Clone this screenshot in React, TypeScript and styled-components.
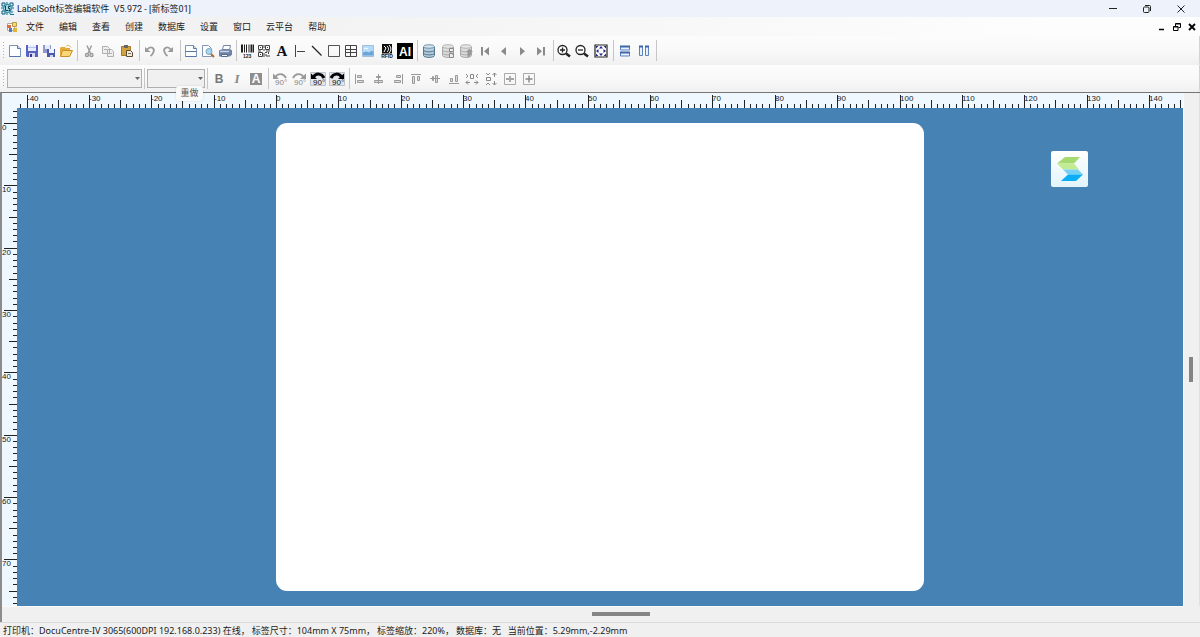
import React, { useLayoutEffect, useRef, useState } from "react";
import styled, { createGlobalStyle } from "styled-components";

const GlobalStyle = createGlobalStyle`
  * { box-sizing: border-box; }
  body { margin: 0; background: #f0f0f0; }
  button { font: inherit; color: inherit; background: none; border: 0; padding: 0; margin: 0; }
  svg { display: block; }
`;

const Window = styled.div`
  display: flex;
  flex-direction: column;
  height: 100vh;
  overflow: hidden;
  font-family: "Noto Sans", "Noto Sans CJK SC", sans-serif;
  font-size: 9px;
  line-height: 14px;
  color: #1a1a1a;
`;

const TitleBar = styled.header`
  display: flex;
  align-items: center;
  height: 17px;
  padding: 0 2px 0 1px;
  gap: 3px;
  background: #eef3fb;
`;

const Title = styled.h1`
  flex: 1;
  margin: 0;
  font-family: Roboto, "Noto Sans CJK SC", sans-serif;
  font-size: 9px;
  font-weight: 400;
  white-space: pre;
`;

const WindowControls = styled.div`
  display: flex;
`;

const WindowButton = styled.button`
  width: 34px;
  height: 17px;
  display: grid;
  place-items: center;
`;

const MenuBar = styled.nav`
  display: flex;
  align-items: center;
  height: 19px;
  padding: 0 1px 0 6px;
  background: linear-gradient(90deg, #f0f0f0 0%, #f3f3f3 28%, #fdfdfd 88%);
`;

const MenuItems = styled.div`
  flex: 1;
  display: flex;
  gap: 15px;
  margin-left: 8px;
`;

const MenuButton = styled.button`
  height: 18px;
  white-space: nowrap;
`;

const ChildButton = styled.button`
  width: 15px;
  height: 18px;
  display: grid;
  place-items: center;
`;

const Toolbar = styled.div<{ $height: number }>`
  display: flex;
  align-items: center;
  flex: none;
  height: ${(p) => p.$height}px;
  background: linear-gradient(#fcfcfc, #f9f9f9 50%, #f0f0f0);
  border-right: 1px solid #d4d4d4;
  border-radius: 0 0 3px 0;
`;

const Grip = styled.span`
  width: 5px;
  height: 19px;
  background: radial-gradient(circle, #b4b4b4 1px, transparent 1px) 2px 0 / 3px 3px repeat-y;
`;

const Group = styled.div<{ $last?: boolean; $padding?: string }>`
  display: flex;
  align-items: center;
  height: 21px;
  padding: ${(p) => p.$padding ?? "0 2px"};
  border-right: ${(p) => (p.$last ? "0" : "1px solid #c6c6c6")};
`;

const ToolButton = styled.button<{ $width: number }>`
  position: relative;
  width: ${(p) => p.$width}px;
  height: 20px;
  display: grid;
  place-items: center;
`;

const Tooltip = styled.span`
  position: absolute;
  z-index: 2;
  top: 45px;
  left: 17px;
  width: 27px;
  height: 15px;
  line-height: 14px;
  border-radius: 3px;
  background: #f9f9f9;
  box-shadow: 0 0 2px #00000026;
  color: #555;
  text-align: center;
`;

const Combo = styled.span<{ $width: number }>`
  position: relative;
  display: flex;
  width: ${(p) => p.$width}px;
  svg {
    position: absolute;
    right: 2px;
    top: 8px;
    pointer-events: none;
  }
`;

const ComboSelect = styled.select`
  appearance: none;
  width: 100%;
  height: 19px;
  border: 1px solid #b0b0b0;
  border-radius: 0;
  background: #f0f0f0;
  font: inherit;
`;

const Workspace = styled.main`
  flex: 1;
  min-height: 0;
  display: grid;
  grid-template-columns: 15px minmax(0, 1fr) 17px;
  grid-template-rows: 15px minmax(0, 1fr) 16px;
  border-top: 1px solid #757575;
  border-left: 2px solid #8c8c8c;
  background: #f0f0f0;
`;

const RulerCell = styled.div`
  background: #f0f8ff;
  min-width: 0;
  min-height: 0;
  overflow: hidden;
`;

const RulerText = styled.text`
  font-family: "Liberation Sans Narrow", "Liberation Sans", sans-serif;
  font-size: 8px;
  fill: #222;
`;

const Canvas = styled.section`
  position: relative;
  display: flex;
  align-items: center;
  justify-content: center;
  background: #4682b4;
  overflow: hidden;
`;

const Label = styled.div`
  flex: none;
  width: 648px;
  height: 468px;
  border-radius: 11px;
  background: #fff;
`;

const FloatingLogo = styled.button`
  position: absolute;
  top: 43px;
  right: 95px;
  width: 37px;
  height: 36px;
  display: grid;
  place-items: center;
  border-radius: 2px;
  background: linear-gradient(#ffffff, #e2f4fd);
`;

const VerticalScroll = styled.div`
  display: flex;
  align-items: center;
  justify-content: center;
  padding: 24px 2px 0 0;
  border-left: 1px solid #fafafa;
  border-right: 1px solid #e0e0e0;
`;

const HorizontalScroll = styled.div`
  grid-column: 1 / 3;
  display: flex;
  align-items: center;
  justify-content: center;
  padding: 0 0 2px 56px;
  border-top: 1px solid #fafafa;
`;

const Thumb = styled.div<{ $width: number; $height: number }>`
  width: ${(p) => p.$width}px;
  height: ${(p) => p.$height}px;
  background: #858585;
`;

const StatusBar = styled.footer`
  flex: none;
  display: flex;
  gap: 2px;
  height: 15px;
  padding-left: 3px;
  line-height: 16px;
  border-top: 1px solid #dadada;
  background: #f0f0f0;
  white-space: pre;
`;

/* ---------- icons ---------- */

const blue = "#5676a8";
const grey = "#9a9a9a";

const Doc = ({ lines = false }: { lines?: boolean }) => (
  <>
    <path d="M2.5 2.5h8l3 3v8h-11z" fill="#fdfeff" stroke="#8094b8" />
    <path d="M10.5 2.5v3h3" fill="#dbe6f5" stroke={blue} />
    {lines && <path d="M2.5 8.500h11" stroke={blue} />}
    <path d="M2.5 13.5h11" stroke={blue} />
  </>
);

const Disk = () => (
  <>
    <path d="M2 2h12v12H3l-1-1z" fill="#5961c4" />
    <path d="M4 2h8v6H4z" fill="#e8edff" />
    <path d="M4 4.5h8" stroke="#b9c4ee" />
    <path d="M5 10h6v4H5z" fill="#d4daf4" />
    <path d="M6 11h2v3H6z" fill="#343a8c" />
  </>
);

const Database = ({ tone, mark }: { tone: string; mark?: "edit" | "arrow" }) => (
  <>
    <path d="M2.500 4v8.500c0 2.500 11 2.500 11 0V4" fill={tone === "on" ? "#b7ccda" : "#dcdcdc"} />
    <path
      d="M2.500 4v8.500c0 2.500 11 2.500 11 0V4M2.500 7c0 2.500 11 2.500 11 0M2.500 10c0 2.500 11 2.500 11 0"
      fill="none"
      stroke={tone === "on" ? "#527a94" : "#a8a8a8"}
    />
    <ellipse cx="8" cy="3.500" rx="5.500" ry="1.800" fill={tone === "on" ? "#d4e4ee" : "#e6e6e6"} stroke={tone === "on" ? "#7597ac" : "#b4b4b4"} />
    {mark === "edit" && <path d="M9.500 5.500h4v3h-4zM9.500 10.500h4v4h-4zM9.500 8l4 4" fill="#eee" stroke="#888" />}
    {mark === "arrow" && <path d="M9.500 15V9H8l3.500-3.500L15 9h-2v3z" fill="#989898" />}
  </>
);

const Rotate = ({ flip, active }: { flip?: boolean; active?: boolean }) => {
  const c = active ? "#000" : grey;
  return (
    <>
      {active && <path d="M.5 1.500h15v13H.5z" fill="#e2e5ee" stroke="#bfc1c9" />}
      <g transform={flip ? "matrix(-1 0 0 1 16 0)" : undefined}>
        <path d="M3.500 6C6 2 11.500 2 14 7" fill="none" stroke={c} strokeWidth={active ? 3 : 1.8} />
        <path d="M1 2.500v5.500h6z" fill={c} />
      </g>
      <text x="3" y="14" fontSize="8" fontFamily="Liberation Sans, sans-serif" fill={active ? "#111" : "#888"}>
        90°
      </text>
    </>
  );
};

const Zoom = ({ plus }: { plus?: boolean }) => (
  <>
    <circle cx="6.500" cy="7" r="4.500" fill="#fff" stroke="#222" strokeWidth="1.300" />
    <path d={plus ? "M4 7h5M6.500 4.500v5" : "M4 7h5"} stroke="#222" strokeWidth="1.300" />
    <path d="M10 10.500l4 3" stroke="#222" strokeWidth="2.500" />
  </>
);

const icons: Record<string, React.ReactNode> = {
  new: <Doc />,
  save: <Disk />,
  saveAs: (
    <>
      <path d="M2 2h8v8H2z" fill="#8d98d2" />
      <path d="M4 2h5v4H4z" fill="#e6ebfb" />
      <path d="M6 6h8v8H6z" fill="#4d5aa8" />
      <path d="M8 6h5v4H8z" fill="#eef2ff" />
      <path d="M9 12h3v2H9z" fill="#ccd4ee" />
    </>
  ),
  open: (
    <>
      <path d="M2 5l1-1h4l1 1h4v8H2z" fill="#e3ab3c" />
      <path d="M2.500 13.500l2-6h10l-3 6z" fill="#fbd777" stroke="#c88f26" />
      <path d="M8 3.500c2-2 4-1 5 1" fill="none" stroke="#e0b455" />
    </>
  ),
  cut: (
    <g fill="none" stroke={grey} strokeWidth="1.400">
      <path d="M6 2.500l3.500 8M10.500 2.500L7 10.500" />
      <circle cx="6" cy="12" r="1.500" />
      <circle cx="10.500" cy="12" r="1.500" />
    </g>
  ),
  copy: (
    <g fill="#eee" stroke="#b0b0b0">
      <path d="M2.500 3.500h5l2 2v5h-7zM7.500 6.500h4l2 2v5h-6z" />
      <path d="M9 10.500h3M4 6.500h3" />
    </g>
  ),
  paste: (
    <>
      <path d="M2.500 3.500h9v9h-9z" fill="#d3a23b" stroke="#a37a2a" />
      <path d="M5 2h4v3H5z" fill="#666" />
      <path d="M7.500 7.500h4l2 2v4h-6z" fill="#f2ead7" stroke="#5a4c31" />
      <path d="M9 10.500h3" stroke="#777" />
    </>
  ),
  undo: (
    <>
      <path d="M5 6.500c4-4.500 8-1 6.500 2.500-.5 1.500-1.500 3-3 4" fill="none" stroke={grey} strokeWidth="1.800" />
      <path d="M3 4v5h5.500z" fill={grey} />
    </>
  ),
  redo: (
    <>
      <path d="M11 6.500c-4-4.500-8-1-6.500 2.500.5 1.500 1.500 3 3 4" fill="none" stroke={grey} strokeWidth="1.800" />
      <path d="M13 4v5H7.500z" fill={grey} />
    </>
  ),
  page: <Doc lines />,
  preview: (
    <>
      <path d="M2.500 2.500h6l3 3v8h-9z" fill="#fcfdff" stroke="#8396b8" />
      <circle cx="9" cy="8.500" r="3" fill="#a5d8ee" stroke="#7da5bd" />
      <path d="M11 11l3 3" stroke="#b06c35" strokeWidth="2" />
    </>
  ),
  print: (
    <>
      <path d="M5.500 6.500l1-4h7l-1 4z" fill="#fff" stroke="#7285a6" />
      <path d="M2 7.500l2-1h10l1 1v4l-2 2H2z" fill="#6e83a8" />
      <path d="M3 8.500h9" stroke="#c8d6ec" strokeWidth="1.500" />
      <path d="M4.500 11.500h6v2h-6z" fill="#f5f8ff" stroke="#566a90" />
    </>
  ),
  barcode: (
    <>
      <path d="M3 1.500v8M12.500 1.500v8" stroke="#222" strokeWidth="2" />
      <path d="M5.500 1.500v8M7.500 1.500v8M10 1.500v8M14.500 1.500v8" stroke="#222" />
      <text x="4" y="14.500" fontSize="5" fontWeight="700" fontFamily="Liberation Sans, sans-serif" fill="#222">
        123
      </text>
    </>
  ),
  qr: (
    <g fill="none" stroke="#444">
      <path d="M2.500 2.500h4v4h-4zM9.500 2.500h4v4h-4zM2.500 9.500h4v4h-4z" />
      <path d="M4 4.500h1M11 4.500h1M4 11.500h1M8 2v3M8 6v2M2 8h3M10 8h4M9 9.500h2M12.500 9v2M9 12h2v2M13 12v2M8 10v4" />
    </g>
  ),
  text: (
    <text x="8" y="13" textAnchor="middle" fontSize="15" fontWeight="700" fontFamily="Liberation Serif, serif" fill="#111">
      A
    </text>
  ),
  rule: <path d="M3.500 2v12M5 8.500h8" stroke="#444" />,
  line: <path d="M3 3l9.500 9.500" stroke="#222" strokeWidth="1.200" />,
  rect: <path d="M2.500 2.500h11v11h-11z" fill="none" stroke="#555" />,
  table: <path d="M2.500 2.500h11v11h-11zM2.500 6.500h11M2.500 9.500h11M7.500 2.500v11" fill="none" stroke="#444" />,
  image: (
    <>
      <path d="M2.500 2.500h11v11h-11z" fill="#b5daf8" stroke="#a0c0de" />
      <path d="M3 12.500v-3l3-1 3 1 3-2 1.500 2v3z" fill="#6da4d8" />
      <path d="M4 5.500h4" stroke="#eff8ff" strokeWidth="1.500" />
    </>
  ),
  rfid: (
    <>
      <path d="M3 1h10v9.500H3z" fill="#111" />
      <path d="M5 3l2 2-2 4M8 3c2 2 2 4 0 6M10 2c2.500 2.500 2.500 5.500 0 8" fill="none" stroke="#fff" />
      <text x="8" y="15" textAnchor="middle" fontSize="5" fontWeight="700" fontFamily="Liberation Sans, sans-serif" fill="#111">
        RFID
      </text>
    </>
  ),
  ai: (
    <>
      <path d="M0 0h16v16H0z" fill="#000" />
      <text x="8" y="12.500" textAnchor="middle" fontSize="12" fontWeight="700" fontFamily="Liberation Sans, sans-serif" fill="#fff">
        AI
      </text>
    </>
  ),
  db: <Database tone="on" />,
  dbEdit: <Database tone="off" mark="edit" />,
  dbGo: <Database tone="off" mark="arrow" />,
  first: <path d="M4 4h2v8.500H4zM12 4v8.500L7 8.250z" fill="#8a8a8a" />,
  prev: <path d="M11 4v8.500L6 8.250z" fill="#8a8a8a" />,
  next: <path d="M6 4v8.500l5-4.250z" fill="#8a8a8a" />,
  last: <path d="M10 4h2v8.500h-2zM4 4v8.500l5-4.250z" fill="#8a8a8a" />,
  zoomIn: <Zoom plus />,
  zoomOut: <Zoom />,
  fit: (
    <>
      <path d="M2 2h12v12H2z" fill="#fff" stroke="#222" strokeWidth="1.200" />
      <path
        d="M8 3l2 2.500H6zM8 13l2-2.500H6zM3 8l2.500-2v4zM13 8l-2.500-2v4zM3 3h2.500L3 5.500zM13 3v2.500L10.500 3zM3 13v-2.500L5.500 13zM13 13h-2.500l2.500-2.500z"
        fill="#23257c"
      />
    </>
  ),
  tileH: (
    <>
      <path d="M3.500 3.500h9v3.500h-9zM3.500 9.500h9V13h-9z" fill="#e8f0fb" stroke="#5c82bd" />
      <path d="M3 3.500h10M3 9.500h10" stroke="#3c66aa" strokeWidth="2" />
    </>
  ),
  tileV: (
    <>
      <path d="M3.500 3.500h3v9h-3zM9.500 3.500h3v9h-3z" fill="#e8f0fb" stroke="#5c82bd" />
      <path d="M3 3.500h4M9 3.500h4" stroke="#3c66aa" strokeWidth="2" />
    </>
  ),
  bold: (
    <text x="8" y="12" textAnchor="middle" fontSize="12" fontWeight="700" fontFamily="Liberation Sans, sans-serif" fill="#777">
      B
    </text>
  ),
  italic: (
    <text x="8" y="12" textAnchor="middle" fontSize="13" fontStyle="italic" fontWeight="700" fontFamily="Liberation Serif, serif" fill="#888">
      I
    </text>
  ),
  invert: (
    <>
      <path d="M2 2h12v12H2z" fill="#8e8e8e" />
      <text x="8" y="12" textAnchor="middle" fontSize="12" fontWeight="700" fontFamily="Liberation Sans, sans-serif" fill="#fff">
        A
      </text>
    </>
  ),
  rotL: <Rotate />,
  rotR: <Rotate flip />,
  rotAllL: <Rotate active />,
  rotAllR: <Rotate flip active />,
  alignL: <path d="M3.500 3v10M5.500 4.500h4v2h-4zM5.500 9.500h6v2h-6z" fill="#ddd" stroke={grey} />,
  alignC: <path d="M7.500 3v10M5.500 5.500h4v1h-4zM3.500 9.500h8v2h-8z" fill="#ddd" stroke={grey} />,
  alignR: <path d="M12.500 3v10M6.500 4.500h4v2h-4zM4.500 9.500h6v2h-6z" fill="#ddd" stroke={grey} />,
  alignT: <path d="M3 3.500h10M4.500 5.500h2v7h-2zM9.500 5.500h2v4h-2z" fill="#ddd" stroke={grey} />,
  alignM: <path d="M3 7.500h10M5.500 5.500h1v4h-1zM8.500 4.500h2v7h-2z" fill="#ddd" stroke={grey} />,
  alignB: <path d="M3 12.500h10M4.500 7.500h2v3h-2zM9.500 4.500h2v6h-2z" fill="#ddd" stroke={grey} />,
  spaceH: (
    <path d="M2 3l2 2-2 2M14 3l-2 2 2 2M6.500 3.500h3v4h-3zM2 11.500h4M10 11.500h4M4 9.500l-2 2 2 2M12 9.500l2 2-2 2" fill="none" stroke="#888" />
  ),
  spaceV: (
    <path d="M3 2l2 2 2-2M3 14l2-2 2 2M3.500 6.500h4v3h-4zM11.500 2v4M11.500 10v4M9.500 4l2-2 2 2M9.500 12l2 2 2-2" fill="none" stroke="#888" />
  ),
  centerH: (
    <>
      <path d="M2.500 2.500h11v11h-11z" fill="none" stroke="#aaa" />
      <path d="M4 8h3M9 8h3M8 5v6" stroke="#888" strokeWidth="1.400" />
    </>
  ),
  centerV: (
    <>
      <path d="M2.500 2.500h11v11h-11z" fill="none" stroke="#aaa" />
      <path d="M4.500 8h7M8 4.500v7" stroke="#888" strokeWidth="1.400" />
    </>
  ),
};

type Tool = [name: string, label: string, width: number];

const mainTools: Tool[][] = [
  [["new", "新建", 17], ["save", "保存", 17], ["saveAs", "另存为", 17], ["open", "打开", 17]],
  [["cut", "剪切", 19], ["copy", "复制", 19], ["paste", "粘贴", 19]],
  [["undo", "撤销", 18], ["redo", "重做", 18]],
  [["page", "页面设置", 17], ["preview", "打印预览", 17], ["print", "打印", 17]],
  [
    ["barcode", "条形码", 17], ["qr", "二维码", 18], ["text", "文本", 18], ["rule", "直线", 17], ["line", "斜线", 17],
    ["rect", "矩形", 17], ["table", "表格", 17], ["image", "图片", 18], ["rfid", "RFID", 19], ["ai", "AI", 18],
  ],
  [
    ["db", "数据库", 19], ["dbEdit", "编辑数据", 19], ["dbGo", "刷新数据", 18], ["first", "首条", 19],
    ["prev", "上一条", 18], ["next", "下一条", 19], ["last", "末条", 19],
  ],
  [["zoomIn", "放大", 18], ["zoomOut", "缩小", 18], ["fit", "适合窗口", 19]],
  [["tileH", "水平平铺", 19], ["tileV", "垂直平铺", 19]],
];

const formatTools: Tool[][] = [
  [["bold", "加粗", 19], ["italic", "斜体", 18], ["invert", "反白", 19]],
  [["rotL", "左旋", 19], ["rotR", "右旋", 19], ["rotAllL", "整体左旋", 19], ["rotAllR", "整体右旋", 19]],
  [
    ["alignL", "左对齐", 18], ["alignC", "水平居中", 19], ["alignR", "右对齐", 19], ["alignT", "顶对齐", 18],
    ["alignM", "垂直居中", 19], ["alignB", "底对齐", 19], ["spaceH", "水平间距", 18], ["spaceV", "垂直间距", 19],
    ["centerH", "页面水平居中", 19], ["centerV", "页面垂直居中", 19],
  ],
];

const ToolGroup = ({ tools, last }: { tools: Tool[]; last?: boolean }) => (
  <Group $last={last} $padding="0 3px 0 1px">
    {tools.map(([name, label, width]) => (
      <ToolButton key={name} type="button" aria-label={label} $width={width}>
        <svg width="16" height="16" viewBox="0 0 16 16" fill="none">
          {icons[name]}
        </svg>
        {name === "redo" && <Tooltip role="tooltip">重做</Tooltip>}
      </ToolButton>
    ))}
  </Group>
);

const FormatCombo = ({ label, width }: { label: string; width: number }) => (
  <Group>
    <Combo $width={width}>
      <ComboSelect aria-label={label} />
      <svg width="5" height="3" viewBox="0 0 5 3">
        <path d="M0 0h5L2.500 3z" fill="#666" />
      </svg>
    </Combo>
  </Group>
);

/* ---------- rulers ---------- */

const PX_PER_MM = 6.235;
const LABEL_WIDTH = 648;
const LABEL_HEIGHT = 468;

const tickLength = (mm: number) => (mm % 10 === 0 ? 13 : mm % 5 === 0 ? 8 : 4);

/** Millimetre marks that fall inside a ruler whose label is centred on it. */
const visibleTicks = (rulerSize: number, labelSize: number) => {
  const origin = (rulerSize - labelSize) / 2;
  const from = Math.ceil(-origin / PX_PER_MM);
  const to = Math.floor((rulerSize - origin) / PX_PER_MM);
  return Array.from({ length: Math.max(0, to - from + 1) }, (_, i) => ({
    mm: from + i,
    at: Math.round(origin + (from + i) * PX_PER_MM),
  }));
};

const useSize = () => {
  const ref = useRef<HTMLDivElement>(null);
  const [size, setSize] = useState({ width: 0, height: 0 });
  useLayoutEffect(() => {
    const el = ref.current!;
    const measure = () => setSize({ width: el.clientWidth, height: el.clientHeight });
    measure();
    const observer = new ResizeObserver(measure);
    observer.observe(el);
    return () => observer.disconnect();
  }, []);
  return [ref, size] as const;
};

const HorizontalRuler = () => {
  const [ref, { width }] = useSize();
  return (
    <RulerCell ref={ref}>
      <svg width="100%" height="15" role="img" aria-label="水平标尺">
        {visibleTicks(width, LABEL_WIDTH).map(({ mm, at }) => (
          <g key={mm}>
            <path d={`M${at + 0.5} ${15 - tickLength(mm)}V15`} stroke="#222" />
            {mm % 10 === 0 && (
              <RulerText x={at} y="8">
                {mm}
              </RulerText>
            )}
          </g>
        ))}
      </svg>
    </RulerCell>
  );
};

const VerticalRuler = () => {
  const [ref, { height }] = useSize();
  return (
    <RulerCell ref={ref}>
      <svg width="15" height="100%" role="img" aria-label="垂直标尺">
        {visibleTicks(height, LABEL_HEIGHT).map(({ mm, at }) => (
          <g key={mm}>
            <path d={`M${15 - tickLength(mm)} ${at + 0.5}H15`} stroke="#222" />
            {mm % 10 === 0 && (
              <RulerText x="0" y={at + 7}>
                {mm}
              </RulerText>
            )}
          </g>
        ))}
      </svg>
    </RulerCell>
  );
};

const menus = ["文件", "编辑", "查看", "创建", "数据库", "设置", "窗口", "云平台", "帮助"];

const status = [
  "打印机：DocuCentre-IV 3065(600DPI 192.168.0.233) 在线，",
  "标签尺寸：104mm X 75mm，",
  "标签缩放：220%，",
  "数据库：无  ",
  "当前位置：5.29mm,-2.29mm",
];

export default function App() {
  return (
    <Window>
      <GlobalStyle />
      <TitleBar>
        <svg width="13" height="13" viewBox="0 0 13 13" fill="none">
          <path d="M0 0h13v13H0z" fill="#d8ecf2" />
          <path d="M1 1h3v3H1zM9 1h3v3H9zM1 9h3v3H1z" stroke="#155e78" />
          <path d="M6 0v3M7.500 2v2M0 6h2M11 6h2M6 10v3M9 9v3M11 9v2M9 12.500h4" stroke="#1b7391" />
          <circle cx="6.500" cy="6.500" r="4" fill="#a6dbe6" stroke="#247c98" />
          <path d="M4.500 4v4.500H7M9 4.500H7.500v2H9v2H7.500" stroke="#0b4258" />
        </svg>
        <Title>{"LabelSoft标签编辑软件  V5.972 - [新标签01]"}</Title>
        <WindowControls>
          <WindowButton type="button" aria-label="最小化">
            <svg width="8" height="8" viewBox="0 0 8 8">
              <path d="M0 3.500h8" stroke="#222" />
            </svg>
          </WindowButton>
          <WindowButton type="button" aria-label="还原">
            <svg width="8" height="8" viewBox="0 0 8 8" fill="none" stroke="#222">
              <rect x=".5" y="2" width="5.500" height="5.500" rx="1" />
              <path d="M2 .5h4.500q1 0 1 1V6" />
            </svg>
          </WindowButton>
          <WindowButton type="button" aria-label="关闭">
            <svg width="8" height="8" viewBox="0 0 8 8">
              <path d="M.5.5l7 7M7.500.5l-7 7" stroke="#222" />
            </svg>
          </WindowButton>
        </WindowControls>
      </TitleBar>

      <MenuBar>
        <svg width="12" height="12" viewBox="0 0 12 12">
          <path d="M1.500 2.500h7v7h-7z" fill="#fff" stroke="#aaa" />
          <path d="M1 4h4v3H1z" fill="#dd6b45" />
          <path d="M6.500 1.500h4v4h-4z" fill="#f9d56a" stroke="#b39a4c" />
          <path d="M3 7h3v4H3z" fill="#5677c5" />
          <path d="M7 7h4v4H7z" fill="#e3b238" />
        </svg>
        <MenuItems>
          {menus.map((m) => (
            <MenuButton key={m} type="button">
              {m}
            </MenuButton>
          ))}
        </MenuItems>
        <ChildButton type="button" aria-label="最小化子窗口">
          <svg width="8" height="8" viewBox="0 0 8 8">
            <path d="M1 6.500h5" stroke="#000" strokeWidth="1.500" />
          </svg>
        </ChildButton>
        <ChildButton type="button" aria-label="还原子窗口">
          <svg width="8" height="8" viewBox="0 0 8 8" fill="none" stroke="#000">
            <path d="M.5 3.500h4.500v4H.5zM2.500 3V.5h5v4H5.500M.5 4h4.500M2.500 1h5" />
          </svg>
        </ChildButton>
        <ChildButton type="button" aria-label="关闭子窗口">
          <svg width="8" height="8" viewBox="0 0 8 8">
            <path d="M1 1l6 6M7 1L1 7" stroke="#000" strokeWidth="1.800" />
          </svg>
        </ChildButton>
      </MenuBar>

      <Toolbar $height={29} role="toolbar" aria-label="标准">
        <Grip />
        {mainTools.map((tools) => (
          <ToolGroup key={tools[0][0]} tools={tools} />
        ))}
      </Toolbar>

      <Toolbar $height={27} role="toolbar" aria-label="格式">
        <Grip />
        <FormatCombo label="字体" width={135} />
        <FormatCombo label="字号" width={58} />
        {formatTools.map((tools, i) => (
          <ToolGroup key={tools[0][0]} tools={tools} last={i === formatTools.length - 1} />
        ))}
      </Toolbar>

      <Workspace>
        <RulerCell />
        <HorizontalRuler />
        <VerticalScroll />
        <VerticalRuler />
        <Canvas>
          <Label />
          <FloatingLogo type="button" aria-label="助手">
            <svg width="26" height="26" viewBox="0 0 26 26">
              <path d="M8 1h15l-6 6.500H0z" fill="#a6d96f" />
              <path d="M0 7.500h17l5 6H6z" fill="#c3ec92" />
              <path d="M6 13.500h15l5 5H11z" fill="#74d0f7" />
              <path d="M11 18.500h15l-7 6.500H4z" fill="#0aaef5" />
            </svg>
          </FloatingLogo>
        </Canvas>
        <VerticalScroll>
          <Thumb $width={4} $height={25} />
        </VerticalScroll>
        <HorizontalScroll>
          <Thumb $width={58} $height={4} />
        </HorizontalScroll>
      </Workspace>

      <StatusBar>
        {status.map((s) => (
          <span key={s}>{s}</span>
        ))}
      </StatusBar>
    </Window>
  );
}
